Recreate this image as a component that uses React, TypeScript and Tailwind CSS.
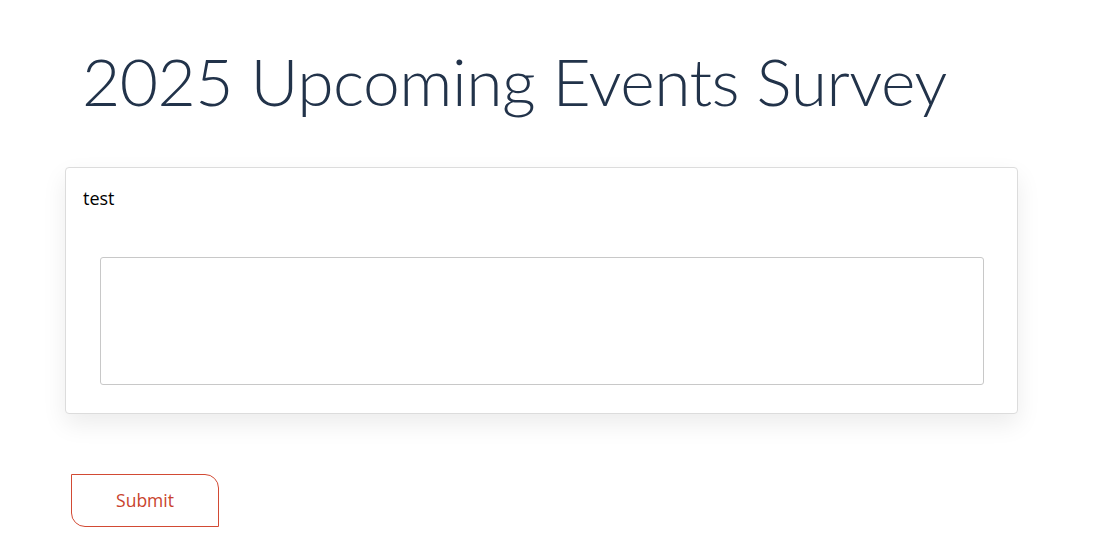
export default function App() {
  return (
    <div className="min-h-screen bg-white">
      <div className="pl-[65px] pt-[36px] w-[1018px]">
        <h1 className="pl-[17px] whitespace-nowrap text-[66px] leading-[90px] font-light text-[#22334a] tracking-[-0.5px] [font-family:'Lato',sans-serif] h-[110px]">
          2025 Upcoming Events Survey
        </h1>

        <div className="mt-[21px] w-[953px] h-[247px] rounded-[4px] border border-[#dcdcdc] bg-white shadow-[0_10px_24px_rgba(0,0,0,0.08)] px-[17px] pt-[18px]">
          <div className="text-[18px] leading-[24px] text-black [font-family:'Open_Sans',sans-serif]">
            test
          </div>
          <textarea className="mt-[47px] ml-[17px] block w-[884px] h-[128px] rounded-[3px] border border-[#c8c8c8] resize-none outline-none" />
        </div>

        <button className="mt-[60px] ml-[6px] w-[148px] h-[53px] border border-[#d24a34] rounded-tr-[14px] rounded-bl-[14px] text-[#c9432d] text-[17.5px] leading-[24px] pb-[2px] [font-family:'Open_Sans',sans-serif]">
          Submit
        </button>
      </div>
    </div>
  );
}
